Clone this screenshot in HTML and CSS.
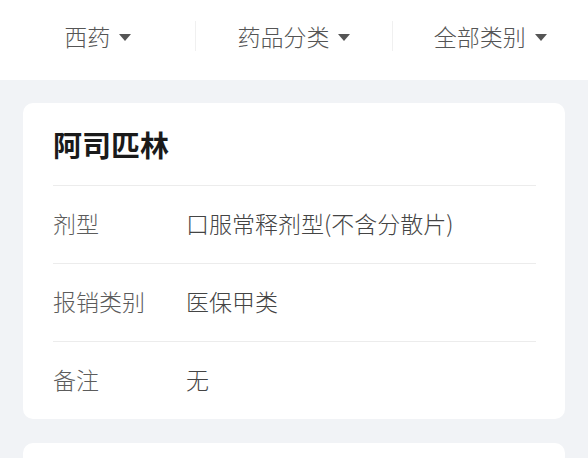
FILE: index.html
```html
<!DOCTYPE html>
<html lang="zh-CN">
<head>
    <meta charset="UTF-8">
    <meta name="viewport" content="width=device-width, initial-scale=1.0">
    <title>药品查询</title>
    <link rel="stylesheet" href="styles.css">
</head>
<body>
    <!-- Filter bar -->
    <div class="filter-bar">
        <div class="filter-item">西药<span class="caret"></span></div>
        <div class="filter-item">药品分类<span class="caret"></span></div>
        <div class="filter-item">全部类别<span class="caret"></span></div>
    </div>

    <!-- Drug list -->
    <div class="drug-list">
        <div class="drug-card">
            <div class="drug-name">阿司匹林</div>
            <div class="drug-row">
                <div class="drug-label">剂型</div>
                <div class="drug-value">口服常释剂型(不含分散片)</div>
            </div>
            <div class="drug-row">
                <div class="drug-label">报销类别</div>
                <div class="drug-value">医保甲类</div>
            </div>
            <div class="drug-row">
                <div class="drug-label">备注</div>
                <div class="drug-value">无</div>
            </div>
        </div>
        <div class="drug-card">
            <div class="drug-name">&nbsp;</div>
        </div>
    </div>
</body>
</html>
```

FILE: styles.css
```css
* {
    margin: 0;
    padding: 0;
    box-sizing: border-box;
    font-family: 'Noto Sans CJK SC', 'Noto Sans', sans-serif;
}

body {
    background-color: #f1f3f6;
    color: #333333;
    overflow: hidden;
    height: 458px;
}

.filter-bar {
    display: flex;
    height: 80px;
    padding-bottom: 8px;
    background: #ffffff;
    align-items: center;
}

.filter-item {
    flex: 1;
    display: flex;
    align-items: center;
    justify-content: center;
    font-size: 23px;
    font-weight: 300;
    color: #555555;
    height: 30px;
    border-left: 1px solid #f0f0f0;
}

.filter-item:first-child {
    border-left: none;
}

.caret {
    width: 0;
    height: 0;
    margin-left: 9px;
    margin-top: 2px;
    border-left: 6px solid transparent;
    border-right: 6px solid transparent;
    border-top: 7px solid #555555;
}

.drug-list {
    padding: 23px 23px 0;
}

.drug-card {
    background: #ffffff;
    border-radius: 10px;
    padding: 0 29px 0 30px;
    margin-bottom: 24px;
}

.drug-name {
    font-size: 29px;
    font-weight: bold;
    color: #1a1a1a;
    line-height: 82px;
}

.drug-row {
    display: flex;
    align-items: center;
    height: 78px;
    padding-bottom: 3px;
    border-top: 1px solid #ececec;
    font-size: 23px;
    font-weight: 300;
}

.drug-label {
    width: 133px;
    color: #5c5c5c;
}

.drug-value {
    flex: 1;
    color: #444444;
}
```
